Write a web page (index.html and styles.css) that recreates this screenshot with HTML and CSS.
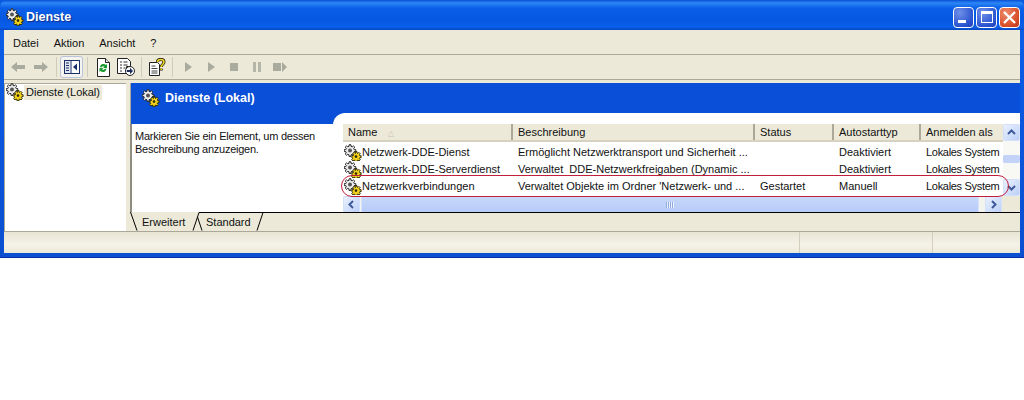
FILE: index.html
```html
<!DOCTYPE html>
<html lang="de">
<head>
<meta charset="utf-8">
<title>Dienste</title>
<link rel="stylesheet" href="styles.css">
</head>
<body>
<svg class="defs" width="0" height="0">
  <defs>
    <symbol id="gears" viewBox="0 0 18 18">
      <path fill="#ededed" stroke="#262626" stroke-width="1" d="M5 .8h2v1.600l1.300.5 1.100-1.100 1.400 1.400-1.100 1.100.5 1.300h1.600v2h-1.600l-.5 1.300 1.100 1.100-1.400 1.400-1.100-1.100-1.300.5v1.600H5v-1.600l-1.300-.5-1.100 1.100-1.400-1.400 1.100-1.100-.5-1.300H.2v-2h1.600l.5-1.300-1.100-1.100 1.400-1.400 1.100 1.100L5 2.400z"/>
      <circle cx="6" cy="6.600" r="2" fill="#555"/>
      <path fill="#f2d21c" stroke="#2e2b05" stroke-width="1" d="M11 7.600h2v1.300l1 .4.900-.9 1.400 1.400-.9.900.4 1h1.300v2h-1.300l-.4 1 .9.900-1.400 1.400-.9-.9-1 .4v1.300h-2v-1.300l-1-.4-.9.900-1.400-1.400.9-.9-.4-1H7.900v-2h1.300l.4-1-.9-.9 1.400-1.400.9.900 1-.4z"/>
      <circle cx="12" cy="12.600" r="1.300" fill="#2e2b05"/>
    </symbol>
  </defs>
</svg>
<main class="window">
  <header class="titlebar">
    <svg class="gear title-gear"><use href="#gears"/></svg>
    <span class="title-text">Dienste</span>
    <div class="caption-buttons">
      <span class="cap cap-min"><i class="min-glyph"></i></span>
      <span class="cap cap-max"><i class="max-glyph"></i></span>
      <span class="cap cap-close">
        <svg width="15" height="15" viewBox="0 0 15 15"><path d="M2 2l11 11M13 2L2 13" stroke="#fff" stroke-width="2.400" fill="none"/></svg>
      </span>
    </div>
  </header>
  <div class="client">
    <nav class="menubar">
      <span class="menu-item">Datei</span>
      <span class="menu-item">Aktion</span>
      <span class="menu-item">Ansicht</span>
      <span class="menu-item">?</span>
    </nav>
    <div class="toolbar">
      <span class="tool"><svg width="16" height="16" viewBox="0 0 16 16"><path d="M1 8l6-5v3h8v4H7v3z" fill="#a9ab9f"/></svg></span>
      <span class="tool"><svg width="16" height="16" viewBox="0 0 16 16"><path d="M15 8L9 3v3H1v4h8v3z" fill="#a9ab9f"/></svg></span>
      <span class="sep"></span>
      <span class="tool tool-active"><svg width="16" height="14" viewBox="0 0 16 14"><rect x=".5" y=".5" width="15" height="13" fill="#fff" stroke="#1c2f6b"/><path d="M1 1h5v12H1z" fill="#dfe3ee"/><path d="M2 3h3M2 5.500h3M2 8h3M2 10.500h3" stroke="#1c2f6b"/><path d="M7 1v12" stroke="#1c2f6b"/><path d="M13 3.500v7L9 7z" fill="#1c2f6b"/></svg></span>
      <span class="sep"></span>
      <span class="tool"><svg width="16" height="19" viewBox="0 0 16 19"><path d="M2.500.5h8l4 4v14h-12z" fill="#fff" stroke="#222"/><path d="M10.500.5v4h4" fill="#ddd" stroke="#222"/><path d="M5 9a3.500 3.500 0 0 1 6-2l1-1v4H8l1.500-1.300A2 2 0 0 0 6.500 9.500zM11.500 11a3.500 3.500 0 0 1-6 2l-1 1v-4h4L7 11.300A2 2 0 0 0 10 10.500z" fill="#189a2c"/></svg></span>
      <span class="tool"><svg width="18" height="18" viewBox="0 0 18 18"><path d="M.5.5h10l3 3v5h-4v7h-9z" fill="#fff" stroke="#222"/><path d="M3 4h2M3 7h2M3 10h2M3 13h2M6.500 4h4M6.500 7h4M6.500 10h2" stroke="#333"/><circle cx="13" cy="13" r="4.500" fill="#fff" stroke="#222"/><path d="M9.800 12h3.200V9.800l3 3.200-3 3.200V14H9.800z" fill="#1d2a5c"/></svg></span>
      <span class="sep"></span>
      <span class="tool"><svg width="18" height="18" viewBox="0 0 18 18"><path d="M1.500 4.500h8l2 2v11h-10z" fill="#fff" stroke="#222"/><path d="M3.500 8h4M3.500 10.500h6M3.500 13h6M3.500 15h6" stroke="#444"/><path d="M9.500 4c0-3.500 6.500-3.500 6.500 0 0 2.500-2.800 2.500-2.800 5M13.200 10.500v2" fill="none" stroke="#22220a" stroke-width="3"/><path d="M9.500 4c0-3.500 6.500-3.500 6.500 0 0 2.500-2.800 2.500-2.800 5M13.200 10.500v1.500" fill="none" stroke="#f6d92a" stroke-width="1.500"/></svg></span>
      <span class="sep"></span>
      <span class="tool"><svg width="12" height="12" viewBox="0 0 12 12"><path d="M3 1l7 5-7 5z" fill="#a9ab9f"/></svg></span>
      <span class="tool"><svg width="12" height="12" viewBox="0 0 12 12"><path d="M3 1l7 5-7 5z" fill="#a9ab9f"/></svg></span>
      <span class="tool"><svg width="12" height="12" viewBox="0 0 12 12"><rect x="2" y="2" width="8" height="8" fill="#a9ab9f"/></svg></span>
      <span class="tool"><svg width="12" height="12" viewBox="0 0 12 12"><path d="M2 1h3v10H2zM7 1h3v10H7z" fill="#b4b6aa"/></svg></span>
      <span class="tool"><svg width="16" height="12" viewBox="0 0 16 12"><path d="M1 2h8v8H1z" fill="#a9ab9f"/><path d="M10 1l5 5-5 5z" fill="#a9ab9f"/></svg></span>
    </div>
    <div class="panes">
      <aside class="tree">
        <div class="tree-row">
          <svg class="gear"><use href="#gears"/></svg>
          <span class="tree-label">Dienste (Lokal)</span>
        </div>
      </aside>
      <section class="content">
        <div class="banner">
          <svg class="gear"><use href="#gears"/></svg>
          <span class="banner-title">Dienste (Lokal)</span>
        </div>
        <div class="details">
          <p class="hint">Markieren Sie ein Element, um dessen Beschreibung anzuzeigen.</p>
          <div class="listpanel">
            <div class="list-main">
              <div class="list-view">
                <div class="row head">
                  <span class="hcell">Name <i class="sort">△</i></span>
                  <span class="hcell">Beschreibung</span>
                  <span class="hcell">Status</span>
                  <span class="hcell">Autostarttyp</span>
                  <span class="hcell">Anmelden als</span>
                </div>
                <div class="row body-row">
                  <span class="cell name-cell"><svg class="gear"><use href="#gears"/></svg>Netzwerk-DDE-Dienst</span>
                  <span class="cell">Ermöglicht Netzwerktransport und Sicherheit ...</span>
                  <span class="cell"></span>
                  <span class="cell">Deaktiviert</span>
                  <span class="cell cell-tight">Lokales System</span>
                </div>
                <div class="row body-row">
                  <span class="cell name-cell"><svg class="gear"><use href="#gears"/></svg>Netzwerk-DDE-Serverdienst</span>
                  <span class="cell">Verwaltet  DDE-Netzwerkfreigaben (Dynamic ...</span>
                  <span class="cell"></span>
                  <span class="cell">Deaktiviert</span>
                  <span class="cell cell-tight">Lokales System</span>
                </div>
                <div class="row body-row">
                  <span class="cell name-cell"><svg class="gear"><use href="#gears"/></svg>Netzwerkverbindungen</span>
                  <span class="cell">Verwaltet Objekte im Ordner 'Netzwerk- und ...</span>
                  <span class="cell">Gestartet</span>
                  <span class="cell">Manuell</span>
                  <span class="cell cell-tight">Lokales System</span>
                </div>
              </div>
              <div class="vscroll">
                <span class="sbtn"><svg width="9" height="7" viewBox="0 0 9 7"><path d="M1 5l3.500-3.500L8 5" fill="none" stroke="#3f5a9c" stroke-width="2"/></svg></span>
                <span class="vtrack"><i class="vthumb"></i></span>
                <span class="sbtn"><svg width="9" height="7" viewBox="0 0 9 7"><path d="M1 2l3.500 3.500L8 2" fill="none" stroke="#3f5a9c" stroke-width="2"/></svg></span>
              </div>
            </div>
            <div class="hscroll">
              <span class="sbtn"><svg width="7" height="9" viewBox="0 0 7 9"><path d="M5 1L1.500 4.500 5 8" fill="none" stroke="#3f5a9c" stroke-width="2"/></svg></span>
              <span class="hthumb"><i class="grip"></i></span>
              <span class="sbtn"><svg width="7" height="9" viewBox="0 0 7 9"><path d="M2 1l3.500 3.500L2 8" fill="none" stroke="#3f5a9c" stroke-width="2"/></svg></span>
              <span class="corner"></span>
            </div>
            <div class="ring"></div>
          </div>
        </div>
        <div class="tabs">
          <svg class="tabs-art" width="136" height="19" viewBox="0 0 136 19">
            <path d="M.5 0l6.500 18.500M63 18.500L69 .5h64l-6 18" stroke="#000" fill="none"/>
            <path d="M67.500 5L72 18.500" stroke="#000" fill="none"/>
          </svg>
          <span class="tab tab-on">Erweitert</span>
          <span class="tab">Standard</span>
        </div>
      </section>
    </div>
    <footer class="statusbar">
      <span class="st st-a"></span>
      <span class="st st-b"></span>
      <span class="st st-c"></span>
    </footer>
  </div>
</main>
</body>
</html>
```
FILE: styles.css
```css
* { box-sizing: border-box; }
html, body { margin: 0; padding: 0; background: #fff; }
body { font-family: "Liberation Sans", Arial, sans-serif; font-size: 11px; color: #111; height: 400px; overflow: hidden; }
.defs { position: absolute; }
.gear { width: 18px; height: 18px; flex: none; }

.window { height: 258px; display: flex; flex-direction: column; padding: 0 4px 4px; background: linear-gradient(180deg, #0a5ae0 0, #0b5ce6 40px, #0a4fd0 100%); border-bottom: 1px solid #0a2ea8; }
.titlebar { height: 30px; flex: none; display: flex; align-items: center; margin: 0 -4px; padding: 4px 4px 0 6px; background: linear-gradient(180deg, #0a4fd4 0, #2c87f5 3px, #0a5fe8 8px, #0657e2 20px, #0a5fea 27px, #0747c0 30px); border-radius: 7px 7px 0 0; }
.title-text { margin-left: 2px; color: #fff; font: bold 12.500px "Liberation Sans", sans-serif; text-shadow: 1px 1px 1px #0a2f8a; }
.caption-buttons { margin-left: auto; display: flex; gap: 2px; }
.cap { width: 21px; height: 21px; border: 1px solid #fff; border-radius: 4px; display: flex; align-items: center; justify-content: center; position: relative; background: radial-gradient(circle at 30% 25%, #6f90e8, #2a53d0 70%, #1f3fb5); }
.cap-close { background: radial-gradient(circle at 30% 25%, #ee8a6a, #d9502a 65%, #b5341a); }
.min-glyph { position: absolute; left: 4px; bottom: 4px; width: 8px; height: 3px; background: #fff; }
.max-glyph { width: 12px; height: 12px; border: 1px solid #fff; border-top-width: 3px; }

.client { flex: 1; display: flex; flex-direction: column; background: #ece9d8; min-height: 0; }
.menubar { height: 25px; display: flex; align-items: center; padding: 2px 0 0 9px; gap: 15px; border-bottom: 1px solid #aca899; flex: none; }
.toolbar { height: 25px; display: flex; align-items: center; padding-left: 2px; border-bottom: 1px solid #aca899; flex: none; }
.tool { width: 23px; height: 22px; display: flex; align-items: center; justify-content: center; flex: none; }
.tool-active { width: 23px; background: #f4f3ee; border: 1px solid #b9c4dc; border-radius: 3px; }
.sep { width: 1px; height: 20px; background: #cfccbb; margin: 0 3px 0 4px; flex: none; }

.panes { flex: 1; display: flex; gap: 4px; min-height: 0; padding-top: 3px; }
.tree { width: 122px; background: #fff; border-left: 1px solid #aca899; border-top: 1px solid #aca899; padding: 0 0 0 1px; }
.tree-row { display: flex; align-items: center; margin-top: -1px; }
.tree-label { background: #ece9d8; padding: 0 2px; line-height: 15px; }

.content { flex: 1; display: flex; flex-direction: column; min-width: 0; }
.banner { height: 41px; flex: none; background: #0a4fd8; border-left: 1px solid #aca899; display: flex; align-items: flex-start; padding: 6px 0 0 11px; color: #fff; gap: 5px; }
.banner-title { font: bold 12.500px "Liberation Sans", sans-serif; line-height: 19px; }
.details { flex: 1; display: flex; background: #fff; border-left: 2px solid #8f8d80; min-height: 0; }
.hint { width: 200px; margin: 6px 0 0 3px; line-height: 13px; flex: none; letter-spacing: -0.25px; }

.listpanel { margin: -11px 0 0 -2px; flex: 1; background: #fff; border-radius: 12px 0 0 0; padding: 11px 0 0 10px; position: relative; display: flex; flex-direction: column; min-width: 0; }
.list-main { display: flex; height: 72px; flex: none; }
.list-view { width: 660px; }
.row { display: grid; grid-template-columns: 170px 242px 79px 87px 82px; }
.head { height: 18px; background: #ece9d8; border-bottom: 2px solid #d6d2c2; margin-bottom: 2px; }
.hcell { border-right: 2px solid #aca899; padding: 1px 0 0 5px; line-height: 15px; height: 16px; overflow: hidden; white-space: nowrap; }
.hcell:last-child { border-right: 0; }
.sort { font-style: normal; color: #c8c5b5; font-size: 8px; margin-left: 8px; }
.body-row { height: 17px; line-height: 17px; }
.cell { padding-left: 5px; white-space: pre; overflow: hidden; }
.cell-tight { letter-spacing: -0.3px; }
.name-cell { display: flex; align-items: center; padding-left: 1px; }

.vscroll { width: 17px; display: flex; flex-direction: column; background: #f8f8f4; }
.vtrack { flex: 1; position: relative; display: flex; align-items: center; }
.vthumb { display: block; width: 17px; height: 8px; background: #c2d2f8; border-radius: 2px; margin-top: -2px; }
.sbtn { width: 17px; height: 17px; flex: none; display: flex; align-items: center; justify-content: center; background: linear-gradient(135deg, #eaf1fe, #bcd0f8); border: 1px solid #d4dffa; border-radius: 2px; }

.hscroll { display: flex; height: 17px; flex: none; background: #f4f4ee; }
.hthumb { flex: 1; margin: 0 6px 0 1px; background: linear-gradient(180deg, #c8d8fb, #b6cbf8); border: 1px solid #d6e1fb; border-radius: 2px; display: flex; align-items: center; justify-content: center; }
.grip { display: block; width: 8px; height: 6px; background: repeating-linear-gradient(90deg, #8fa8de 0 1px, #eef3fe 1px 2px); }
.corner { width: 18px; background: #ece9d8; flex: none; }

.ring { position: absolute; left: 8px; top: 62px; width: 668px; height: 22px; border: 1px solid #c0203c; border-radius: 11px; pointer-events: none; }

.tabs { height: 19px; flex: none; display: flex; position: relative; padding-left: 12px; background: #ece9d8; }
.tabs::after { content: ""; position: absolute; left: 133px; right: 0; top: 0; height: 1px; background: #000; }
.tabs-art { position: absolute; left: 0; top: 0; }
.tab { line-height: 21px; position: relative; width: 64px; }
.statusbar { height: 22px; flex: none; display: flex; border-top: 1px solid #aca899; background: linear-gradient(180deg, #e8e5d4 0, #f5f3e8 60%, #ece9d8 100%); }
.st { border-right: 1px solid #d2cfbf; height: 100%; }
.st-a { width: 796px; }
.st-b { width: 133px; }
.st-c { flex: 1; border-right: 0; }
```
